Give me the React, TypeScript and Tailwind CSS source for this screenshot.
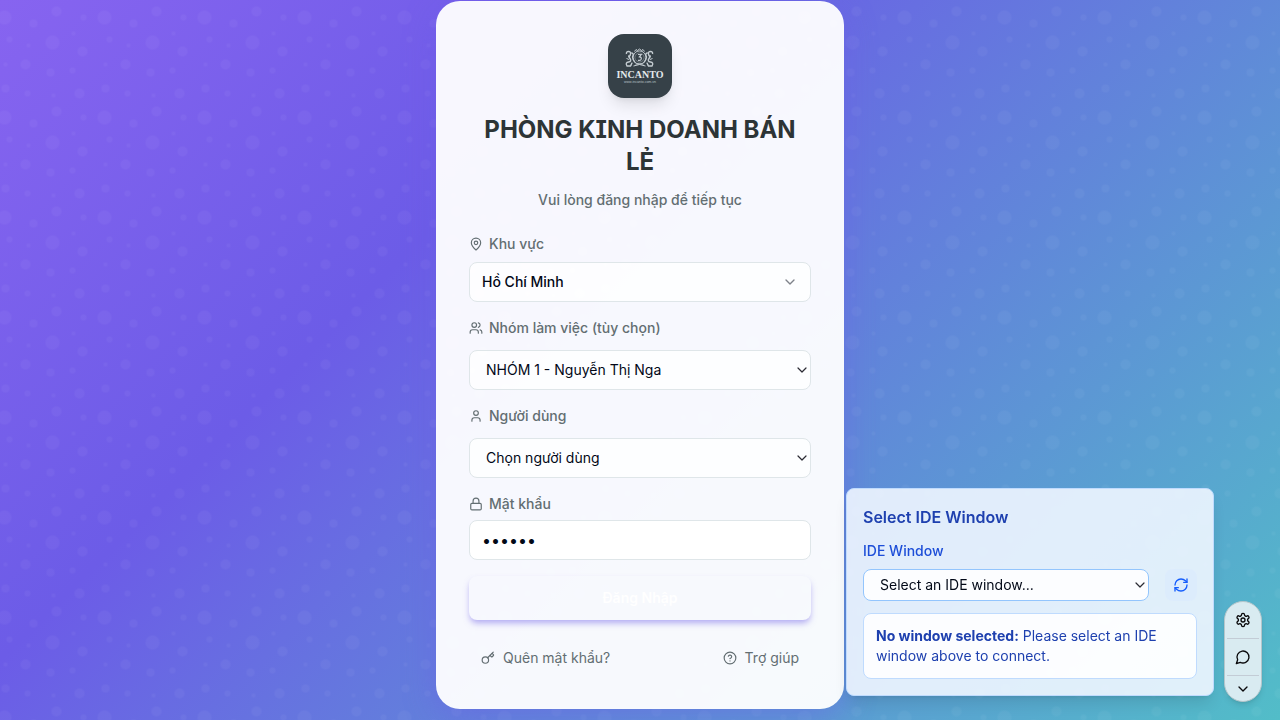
import React from "react";
import {
  ChevronDown,
  CircleHelp,
  Key,
  Lock,
  MapPin,
  RefreshCw,
  User,
  Users,
} from "lucide-react";

const dots: [number, number, number][] = [
  [11, 11, 7], [59, 36, 7],
  [16, 33, 3], [79, 64, 3], [34, 87, 3], [90, 11, 3],
  [12, 82, 4], [40, 17, 4], [57, 66, 4],
  [63, 5, 5], [86, 87, 5], [32, 58, 5], [89, 45, 5],
  [80, 27, 2], [60, 89, 2], [35, 39, 2], [12, 58, 2],
];

function Backdrop() {
  return (
    <svg className="absolute inset-0 h-full w-full" aria-hidden="true">
      <defs>
        <pattern id="bubbles" width="100" height="100" x="-6.5" y="6.5" patternUnits="userSpaceOnUse">
          {dots.map(([x, y, r]) => (
            <circle key={`${x}-${y}`} cx={x} cy={y} r={r} fill="#fff" fillOpacity="0.04" />
          ))}
        </pattern>
      </defs>
      <rect width="100%" height="100%" fill="url(#bubbles)" />
    </svg>
  );
}

function Logo() {
  return (
    <svg viewBox="0 0 64 64" className="size-16 rounded-2xl bg-[#364148] shadow-lg" role="img" aria-label="Incanto">
      <g fill="none" stroke="#c3cbd0">
        <circle cx="31.5" cy="23.5" r="6.6" strokeWidth="1" />
        <circle cx="31.5" cy="23.5" r="4.6" strokeWidth="0.6" strokeOpacity="0.7" />
        <path d="M30 20.5h3.2l-1.8 2.3q2.3.3 1.9 2.2t-3.3 1.3" strokeWidth="1.2" />
        <path d="M26.5 17.5l1.5-2 1.5 1 2-1.5 2 1.5 1.5-1 1.5 2" strokeWidth="1" />
        <path d="M18.5 20q-.5-2.5 2-2.5t2 2.5-1.5 2 1 2.5-1.5 3.5-1.5 4h3.5l1.5-3M23.5 18.5l2 2-1 2.5 1 3 1.5 2.5" strokeWidth="1.4" />
        <path d="M44.5 20q.5-2.500-2-2.500t-2 2.5 1.5 2-1 2.5 1.5 3.5 1.5 4h-3.5l-1.5-3M39.5 18.5l-2 2 1 2.5-1 3-1.5 2.5" strokeWidth="1.4" />
        <path d="M18.5 24.5l2.5 1M44.5 24.5l-2.5 1M24 28.5l-1 3M39 28.5l1 3" strokeWidth="1" />
        <path d="M25.5 32q6-3 12 0M27.5 30h8" strokeWidth="1" />
      </g>
      <text x="32" y="43.5" textAnchor="middle" fill="#e3e8eb" fontSize="10" fontWeight="700" fontFamily="Liberation Serif, serif">
        INCANTO
      </text>
      <text x="32" y="48.5" textAnchor="middle" fill="#b9c2c7" fontSize="3.5" fontFamily="Liberation Sans, sans-serif">
        www.incanto.com.vn
      </text>
    </svg>
  );
}

function GearIcon() {
  return (
    <svg width="16" height="16" viewBox="0 0 24 24" fill="none" stroke="currentColor" strokeWidth="2" strokeLinecap="round" strokeLinejoin="round" aria-hidden="true">
      <path d="M12.22 2h-.44a2 2 0 0 0-2 2v.18a2 2 0 0 1-1 1.73l-.43.25a2 2 0 0 1-2 0l-.15-.08a2 2 0 0 0-2.73.73l-.22.38a2 2 0 0 0 .73 2.73l.15.1a2 2 0 0 1 1 1.72v.51a2 2 0 0 1-1 1.74l-.15.09a2 2 0 0 0-.73 2.73l.22.38a2 2 0 0 0 2.73.73l.15-.08a2 2 0 0 1 2 0l.43.25a2 2 0 0 1 1 1.73V20a2 2 0 0 0 2 2h.44a2 2 0 0 0 2-2v-.18a2 2 0 0 1 1-1.73l.43-.25a2 2 0 0 1 2 0l.15.08a2 2 0 0 0 2.73-.73l.22-.39a2 2 0 0 0-.73-2.73l-.15-.08a2 2 0 0 1-1-1.74v-.5a2 2 0 0 1 1-1.74l.15-.09a2 2 0 0 0 .73-2.73l-.22-.38a2 2 0 0 0-2.73-.73l-.15.08a2 2 0 0 1-2 0l-.43-.25a2 2 0 0 1-1-1.73V4a2 2 0 0 0-2-2z" />
      <circle cx="12" cy="12" r="3" />
    </svg>
  );
}

function ChatIcon() {
  return (
    <svg width="16" height="16" viewBox="0 0 24 24" fill="none" stroke="currentColor" strokeWidth="2" strokeLinecap="round" strokeLinejoin="round" aria-hidden="true">
      <path d="M7.9 20A9 9 0 1 0 4 16.1L2 22Z" />
    </svg>
  );
}

const labelClass = "flex items-center gap-1.5 text-sm font-medium text-[#636e72]";

function NativeSelect({ id, option, className }: { id: string; option: string; className: string }) {
  return (
    <div className="relative flex-1">
      <select
        id={id}
        className={`block w-full appearance-none rounded-lg border pr-8 pl-4 text-sm text-[#020817] ${className}`}
      >
        <option>{option}</option>
      </select>
      <span className="pointer-events-none absolute inset-y-0 right-0 flex items-center pr-px text-[#2b2b33]">
        <ChevronDown size={16} strokeWidth={1.8} />
      </span>
    </div>
  );
}

function LoginCard() {
  return (
    <main className="relative w-full max-w-[408px] rounded-3xl border border-white/20 bg-white/95 p-8 shadow-[0_8px_32px_rgba(108,92,231,0.45)]">
      <header className="flex flex-col items-center text-center">
        <Logo />
        <h1 className="mt-4 text-2xl font-bold text-[#2d3436] [font-feature-settings:'cv08'] [font-optical-sizing:none]">
          PHÒNG KINH DOANH BÁN LẺ
        </h1>
        <p className="mt-3 text-sm font-medium text-[#636e72]">Vui lòng đăng nhập để tiếp tục</p>
      </header>

      <form className="mt-6 flex flex-col gap-4" onSubmit={(e) => e.preventDefault()}>
        <div className="flex flex-col gap-2">
          <label htmlFor="region" className={labelClass}>
            <MapPin size={14} />
            Khu vực
          </label>
          <button
            id="region"
            type="button"
            className="flex h-10 w-full items-center justify-between rounded-lg border border-[#dfe6e9] bg-white/80 px-3 text-sm font-medium text-[#020817]"
          >
            Hồ Chí Minh
            <ChevronDown size={16} className="opacity-50" />
          </button>
        </div>

        <div className="flex flex-col gap-3">
          <label htmlFor="team" className={labelClass}>
            <Users size={14} />
            Nhóm làm việc (tùy chọn)
          </label>
          <NativeSelect id="team" option="NHÓM 1 - Nguyễn Thị Nga" className="h-10 border-[#dfe6e9] bg-white/80" />
        </div>

        <div className="flex flex-col gap-3">
          <label htmlFor="user" className={labelClass}>
            <User size={14} />
            Người dùng
          </label>
          <NativeSelect id="user" option="Chọn người dùng" className="h-10 border-[#dfe6e9] bg-white/80" />
        </div>

        <div className="flex flex-col gap-1.5">
          <label htmlFor="password" className={labelClass}>
            <Lock size={14} />
            Mật khẩu
          </label>
          <input
            id="password"
            type="password"
            defaultValue="123456"
            className="h-10 w-full rounded-lg border border-[#dfe6e9] bg-white px-3 text-base text-[#020817]"
          />
        </div>

        <button
          type="submit"
          className="h-11 w-full rounded-lg text-sm font-semibold text-white shadow-[0_4px_6px_-1px_rgba(108,92,231,0.5)]"
        >
          Đăng Nhập
        </button>
      </form>

      <nav className="mt-5 flex justify-between text-sm text-[#636e72]">
        <a href="#forgot" className="flex h-9 items-center gap-2 px-3">
          <Key size={14} />
          Quên mật khẩu?
        </a>
        <a href="#help" className="flex h-9 items-center gap-2 px-3">
          <CircleHelp size={14} />
          Trợ giúp
        </a>
      </nav>
    </main>
  );
}

function IdePanel() {
  return (
    <section className="mb-1.5 w-[368px] rounded-lg border border-[#bfdbfe] bg-[#eff6ff]/90 p-4 shadow-lg">
      <h2 className="text-base font-semibold text-[#1e40af]">Select IDE Window</h2>
      <label htmlFor="ide" className="mt-3 block text-sm font-medium text-[#1d4ed8]">
        IDE Window
      </label>
      <div className="mt-2 flex gap-4">
        <NativeSelect id="ide" option="Select an IDE window..." className="h-8 border-[#93c5fd] bg-white/90" />
        <button
          type="button"
          aria-label="Refresh"
          className="flex size-8 items-center justify-center rounded-lg bg-[#dbeafe]/60 text-[#155dfc]"
        >
          <RefreshCw size={16} />
        </button>
      </div>
      <p className="mt-3 rounded-lg border border-[#bfdbfe] bg-white/90 p-3 text-sm text-[#1e40af]">
        <strong className="font-bold">No window selected:</strong> Please select an IDE window above to connect.
      </p>
    </section>
  );
}

function Toolbar() {
  return (
    <div className="flex w-[38px] flex-col divide-y divide-[#c3ccd6] rounded-full border border-[#b5c6cb] bg-[#d9ebf1] px-0.5 text-[#09090b] shadow-md">
      <button type="button" aria-label="Settings" className="flex h-[37px] items-center justify-center">
        <GearIcon />
      </button>
      <button type="button" aria-label="Chat" className="flex h-[37px] items-center justify-center">
        <ChatIcon />
      </button>
      <button type="button" aria-label="Collapse" className="flex h-[25px] items-center justify-center">
        <ChevronDown size={16} />
      </button>
    </div>
  );
}

export default function App() {
  return (
    <div className="relative flex min-h-screen items-start justify-center overflow-hidden bg-[linear-gradient(135deg,#8764f0_0%,#6c5ce7_33%,#52bdc8_100%)] pt-px font-['Inter',sans-serif]">
      <Backdrop />
      <LoginCard />
      <aside className="fixed right-[18px] bottom-[18px] flex items-end gap-2.5">
        <IdePanel />
        <Toolbar />
      </aside>
    </div>
  );
}
